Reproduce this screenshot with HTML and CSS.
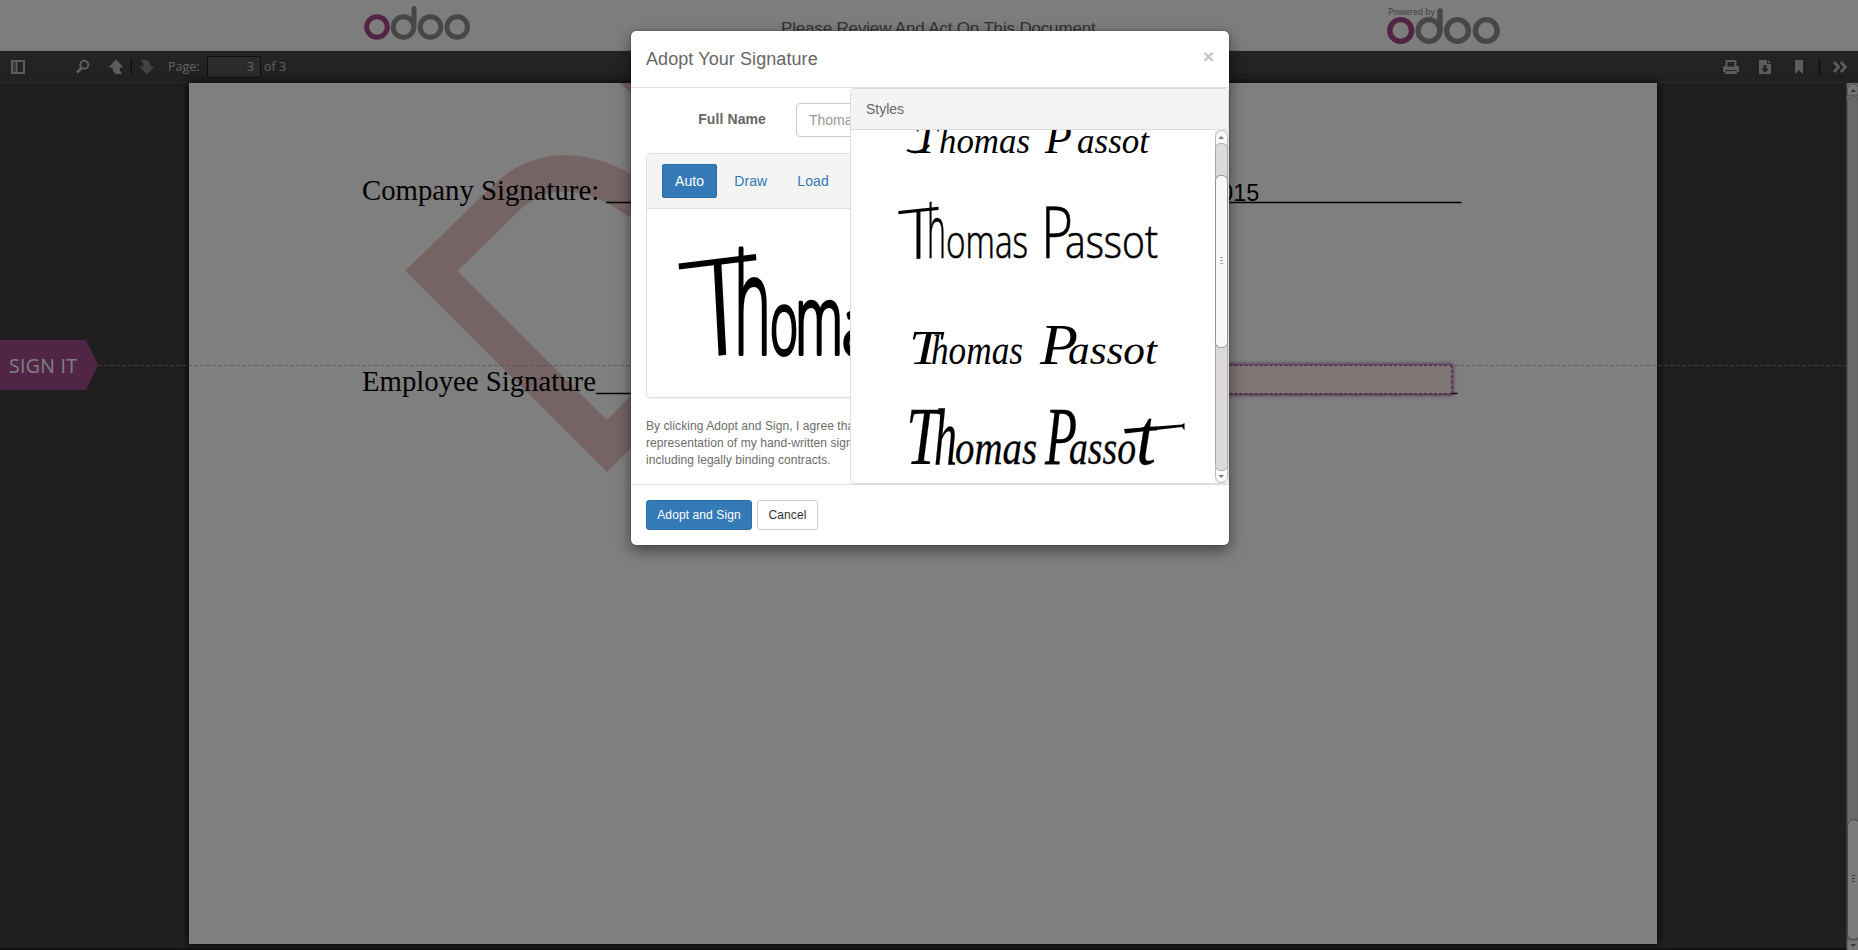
FILE: index.html
```html
<!DOCTYPE html>
<html lang="en">
<head>
<meta charset="utf-8">
<title>Adopt Your Signature</title>
<link rel="stylesheet" href="styles.css">
</head>
<body>
<div class="app">
  <header class="topbar">
    <svg class="logo-left" width="108" height="36" viewBox="363 5 108 36" fill="none" stroke-width="5">
      <circle cx="377" cy="27" r="10.3" stroke="#a24689"/>
      <g stroke="#8f8f8f"><circle cx="403.5" cy="27" r="10.3"/><circle cx="430.5" cy="27" r="10.3"/><circle cx="457.2" cy="27" r="10.3"/><path d="M414 27V8.5" stroke-linecap="round"/></g>
    </svg>
    <div class="headline">Please Review And Act On This Document</div>
    <div class="powered">
      <span class="powered-label">Powered by</span>
      <svg width="115" height="38" viewBox="1386 7 115 38" fill="none" stroke-width="5.4">
        <circle cx="1400.7" cy="30.5" r="10.9" stroke="#a24689"/>
        <g stroke="#8f8f8f"><circle cx="1429" cy="30.5" r="10.9"/><circle cx="1457.5" cy="30.5" r="10.9"/><circle cx="1486.3" cy="30.5" r="10.9"/><path d="M1440 30V11" stroke-linecap="round"/></g>
      </svg>
    </div>
  </header>

  <nav class="toolbar">
    <svg class="tools" width="150" height="32" viewBox="10 51 150 32">
      <path d="M12 61H24V73H12ZM16.5 61V73" fill="none" stroke="#b8b8b8" stroke-width="2"/>
      <path d="M13 62H15.500V72H13Z" fill="#777"/>
      <circle cx="84.3" cy="64.8" r="4" fill="none" stroke="#b8b8b8" stroke-width="2.1"/>
      <path d="M81.5 68L77 72.5" stroke="#b8b8b8" stroke-width="2.8"/>
      <path d="M116 59.500L123.500 67.500H119.7Q119.5 72 122.5 74H116Q112.5 72 112.5 67.5H108.500Z" fill="#b8b8b8"/>
      <path d="M131.5 59V75" stroke="#161616" stroke-width="1.4"/><path d="M132.5 59V75" stroke="#555" stroke-width=".6"/>
      <path d="M147 74.500L154.500 66.500H150.5Q150.5 61.5 147 60H140.5Q143.5 62 143.5 66.5H139.500Z" fill="#858585"/>
    </svg>
    <span class="page-label">Page:</span>
    <span class="page-input">3</span>
    <span class="page-count">of 3</span>
    <svg class="tools-right" width="130" height="32" viewBox="1720 51 130 32">
      <g fill="#b8b8b8">
        <path d="M1725.5 60H1735L1736.5 61.5V66H1738Q1739 66 1739 67V72H1736.5V70H1725.5V72H1723V67.5Q1723 66 1725.5 65.5ZM1727.5 62V66.5H1734.5V62Z" fill-rule="evenodd"/>
        <path d="M1726 71H1736L1737.5 74H1724.5Z"/>
        <path d="M1759 60H1767V64H1771V74H1759ZM1768 60L1771 63H1768Z"/>
        <path d="M1795 60H1803V74L1799 70L1795 74Z"/>
      </g>
      <path d="M1763.5 65H1766.5V68.5H1769L1765 73L1761 68.5H1763.5Z" fill="#444"/>
      <path d="M1819.5 59V75" stroke="#161616" stroke-width="1.4"/>
      <path d="M1834 62L1838.5 67L1834 72M1841 62L1845.5 67L1841 72" fill="none" stroke="#b8b8b8" stroke-width="2.8"/>
    </svg>
  </nav>

  <main class="viewer">
    <div class="sheet">
      <svg class="watermark" width="460" height="390" viewBox="189 83 460 390">
        <path d="M620 83H640V102Z" fill="#eac8c6"/>
        <path fill="none" stroke="#eac8c6" stroke-width="36.500" d="M640 203Q602 173 566 173.500Q530 173 503 201L431.200 271L607 446L650 402"/>
      </svg>
      <div class="doc-line first"><span class="doc-text">Company Signature: _____</span><span class="doc-fill">_________________</span></div>
      <div class="doc-line second"><span class="doc-text">Employee Signature_____</span><span class="doc-fill">_________________</span></div>
      <div class="doc-date">2015</div>
    </div>
    <div class="guide"></div>
    <div class="sign-field"></div>
    <div class="sign-tag"><span class="sign-text">SIGN IT</span></div>
    <div class="outer-scroll">
      <svg width="12" height="867" viewBox="1846 83 12 867">
        <path d="M1846 83H1858V950H1846Z" fill="#d6d4d0"/>
        <path d="M1847.5 95V88Q1850 84 1853.5 84Q1857 84 1858 87V95Z" fill="#f2f2f2" stroke="#aaa"/>
        <path d="M1850.500 92H1856L1853.200 89Z" fill="#666"/>
        <path d="M1847.500 950V101Q1850 96.500 1853.500 96.500Q1857 96.500 1858 100V950Z" fill="#d8d5cf" stroke="#aaa"/>
        <path d="M1847.500 825Q1849 819.500 1853.500 819.500Q1857 819.500 1858.500 822V937Q1857 939.500 1853.500 939.500Q1848 939.500 1847.500 934Z" fill="#f6f6f6" stroke="#888"/>
        <path d="M1852 875.500H1855M1852 878.500H1855M1852 881.500H1855" stroke="#777"/>
        <path d="M1847.500 941V950H1858V941Z" fill="#eee"/><path d="M1850.500 944H1856L1853.200 947Z" fill="#666"/>
        <path d="M1846.500 83V950" stroke="#777"/>
      </svg>
    </div>
  </main>
</div>

<div class="backdrop">
  <section class="modal">
    <div class="modal-header"><h4 class="modal-title">Adopt Your Signature</h4><span class="close">×</span></div>
    <div class="modal-body">
      <div class="name-row"><label class="name-label">Full Name</label><div class="name-input">Thomas Passot</div></div>
      <div class="card">
        <div class="tabs"><span class="tab active">Auto</span><span class="tab">Draw</span><span class="tab">Load</span></div>
        <svg class="preview" width="203" height="187" viewBox="647 210 203 187">
          <text class="hand" font-size="136" textLength="79" lengthAdjust="spacingAndGlyphs" transform="translate(683 361) skewY(-7) skewX(3)">T</text>
          <text class="hand" y="355" stroke="#000" stroke-width="4" stroke-linejoin="round"><tspan x="734" font-size="139" textLength="37" lengthAdjust="spacingAndGlyphs">h</tspan><tspan x="770" font-size="88" textLength="28" lengthAdjust="spacingAndGlyphs">o</tspan><tspan x="795" font-size="96" textLength="48" lengthAdjust="spacingAndGlyphs">m</tspan><tspan x="842" font-size="80" textLength="60" lengthAdjust="spacingAndGlyphs">as</tspan></text>
        </svg>
      </div>
      <p class="legal">By clicking Adopt and Sign, I agree that the signature will be the electronic<br>representation of my hand-written signature for all purposes when I use it,<br>including legally binding contracts.</p>
      <aside class="styles">
        <div class="styles-head">Styles</div>
        <div class="styles-body">
          <svg class="choices" width="364" height="353" viewBox="851 130 364 353">
            <text class="pen" y="153"><tspan x="914" font-size="42">T</tspan><tspan x="939" font-size="36" textLength="91" lengthAdjust="spacingAndGlyphs">homas</tspan> <tspan x="1045" font-size="44">P</tspan><tspan x="1077" font-size="36" textLength="72" lengthAdjust="spacingAndGlyphs">assot</tspan></text>
            <path d="M907 150Q919 156 929 145" class="swash"/>
            <text class="hand" font-size="70" textLength="41" lengthAdjust="spacingAndGlyphs" transform="translate(898 261) skewY(-6)">T</text>
            <text class="hand thin" y="258"><tspan x="927" font-size="74" textLength="19" lengthAdjust="spacingAndGlyphs">h</tspan><tspan x="946" font-size="46" textLength="82" lengthAdjust="spacingAndGlyphs">omas</tspan> <tspan x="1041" font-size="72" textLength="32" lengthAdjust="spacingAndGlyphs">P</tspan><tspan x="1065" font-size="46" textLength="93" lengthAdjust="spacingAndGlyphs">assot</tspan></text>
            <text class="pen" y="364"><tspan x="909" font-size="48" textLength="32" lengthAdjust="spacingAndGlyphs">T</tspan><tspan x="931" font-size="42" textLength="92" lengthAdjust="spacingAndGlyphs">homas</tspan> <tspan x="1040" font-size="56" textLength="38" lengthAdjust="spacingAndGlyphs">P</tspan><tspan x="1068" font-size="41" textLength="89" lengthAdjust="spacingAndGlyphs">assot</tspan></text>
            <text class="pen brush" y="464"><tspan x="906" font-size="82" textLength="34" lengthAdjust="spacingAndGlyphs">T</tspan><tspan x="934" font-size="80" textLength="23" lengthAdjust="spacingAndGlyphs">h</tspan><tspan x="955" font-size="48" textLength="82" lengthAdjust="spacingAndGlyphs">omas</tspan> <tspan x="1045" font-size="82" textLength="32" lengthAdjust="spacingAndGlyphs">P</tspan><tspan x="1069" font-size="48" textLength="67" lengthAdjust="spacingAndGlyphs">asso</tspan><tspan x="1136" font-size="80" textLength="20" lengthAdjust="spacingAndGlyphs">t</tspan></text>
            <path d="M1124 429L1182 424.500L1184.500 423V430.500L1182 427L1125 433.500Z"/>
          </svg>
          <svg class="inner-scroll" width="13" height="353" viewBox="1215 130 13 353">
            <path d="M1215 130H1228V483H1215Z" fill="#f1f1f1"/>
            <rect x="1215.500" y="130.500" width="12" height="352" rx="6" fill="#f8f8f8" stroke="#bbb"/>
            <rect x="1215.500" y="143.500" width="12" height="327" rx="5" fill="#dcdbd9" stroke="#aaa"/>
            <rect x="1215.500" y="175.500" width="12" height="172" rx="5" fill="#f7f7f7" stroke="#969492"/>
            <path d="M1220 257.500H1223M1220 260.500H1223M1220 263.500H1223" stroke="#aaa"/>
            <path d="M1218.500 139H1224L1221.200 136ZM1218.500 475H1224L1221.200 478Z" fill="#777"/>
          </svg>
        </div>
      </aside>
    </div>
    <div class="modal-footer"><span class="btn primary">Adopt and Sign</span><span class="btn">Cancel</span></div>
  </section>
</div>
</body>
</html>
```
FILE: styles.css
```css
* { box-sizing: border-box; }
body { margin: 0; width: 1858px; height: 950px; overflow: hidden; font: 14px/20px "Liberation Sans", Arial, sans-serif; color: #666; position: relative; }
.app { width: 1858px; height: 950px; display: flex; flex-direction: column; background: #3e3e3e; }
.topbar { height: 51px; flex: none; background: #fafafa; display: flex; align-items: flex-start; padding-left: 363px; border-bottom: 1px solid #e6e6e6; }
.logo-left { margin-top: 5px; }
.headline { width: 316px; margin: 19px 0 0 310px; font-size: 17px; letter-spacing: -.17px; line-height: 20px; white-space: nowrap; }
.powered { margin: 7px 0 0 289px; position: relative; height: 38px; }
.powered svg { display: block; }
.powered-label { position: absolute; left: 2px; top: 0; font: 8.5px/10px "Open Sans", sans-serif; white-space: nowrap; color: #777; }
.toolbar { height: 32px; flex: none; display: flex; align-items: center; background: linear-gradient(#494949, #424242); border-bottom: 1px solid #555; padding: 0 8px 0 10px; font: 12.5px/20px "Open Sans", sans-serif; color: #c4c4c4; }
.page-label { margin-left: 8px; width: 39px; white-space: nowrap; }
.page-input { width: 54px; height: 22px; border: 1px solid #1c1c1c; border-radius: 2px; background: #565656; text-align: right; padding-right: 6px; }
.page-count { margin-left: 3px; }
.tools-right { margin-left: auto; }
.viewer { flex: 1; position: relative; border-bottom: 2px solid #2d2428; }
.sheet { position: relative; margin-left: 189px; width: 1468px; height: 861px; background: #fff; box-shadow: 0 0 9px #000; font: 28.75px/40px "Liberation Serif", serif; color: #000; padding: 87px 196px 0 173px; }
.watermark { position: absolute; left: 0; top: 0; }
.doc-line { position: relative; display: flex; justify-content: space-between; height: 40px; white-space: pre; }
.doc-line.second { margin: 151px 4px 0 0; }
.doc-date { position: absolute; left: 1018px; top: 90px; font: 23.5px/40px "Liberation Sans", sans-serif; }
.guide { position: absolute; left: 98px; right: 12px; top: 282px; height: 1px; background: repeating-linear-gradient(90deg, #a0a0a0 0 4px, transparent 4px 6px); opacity: .65; }
.sign-field { position: absolute; left: 1100px; top: 282px; width: 352px; height: 29px; background: #fdecea; border: 1px dashed #9e488c; box-shadow: 0 0 4px 1px #a24689; }
.sign-tag { position: absolute; left: 0; top: 257px; width: 98px; height: 50px; background: #a04a8c; clip-path: polygon(0 0, 86px 0, 100% 50%, 86px 100%, 0 100%); color: #fff; font: 19.5px/52px "Open Sans", sans-serif; padding-left: 9px; letter-spacing: .3px; }
.outer-scroll { position: absolute; right: 0; top: 0; height: 867px; }
.outer-scroll svg { display: block; }
.backdrop { position: absolute; inset: 0; background: rgba(0, 0, 0, .5); padding: 31px 0 0 631px; }
.modal { width: 598px; height: 514px; background: #fff; border-radius: 5px; box-shadow: 0 5px 15px rgba(0, 0, 0, .5), 0 0 1px #000; }
.modal-header { height: 57px; border-bottom: 1px solid #e2e2e2; display: flex; justify-content: space-between; padding: 16px 15px 0; }
.modal-title { margin: 0; font-size: 18px; letter-spacing: .08px; line-height: 25px; font-weight: 400; }
.close { font-weight: 700; font-size: 19px; line-height: 20px; color: #c4c4c4; }
.modal-body { position: relative; height: 397px; padding: 15px; overflow: hidden; border-bottom: 1px solid #e2e2e2; }
.name-row { display: flex; height: 34px; align-items: center; }
.name-label { width: 120px; text-align: right; font-weight: 700; padding-bottom: 2px; letter-spacing: .1px; }
.name-input { margin-left: 30px; width: 300px; height: 34px; border: 1px solid #ccc; border-radius: 4px; padding: 6px 12px; color: #999; }
.card { margin-top: 16px; height: 245px; border: 1px solid #ddd; border-radius: 4px; box-shadow: 0 1px 1px rgba(0, 0, 0, .05); }
.tabs { height: 55px; background: #f4f4f4; border-bottom: 1px solid #ddd; display: flex; padding: 10px 15px; gap: 4px; }
.tab { height: 34px; padding: 7px 13px; line-height: 20px; color: #337ab7; border-radius: 3px; letter-spacing: .1px; }
.tab.active { background: #337ab7; color: #fff; box-shadow: inset 0 0 0 1px #2a6ca5; }
.preview, .choices { display: block; }
.legal { margin: 20px 0 0; font-size: 12px; line-height: 17.14px; white-space: nowrap; color: #6c6c6c; letter-spacing: .07px; }
.styles { position: absolute; left: 219px; top: 0; width: 379px; height: 396px; border: 1px solid #ddd; border-radius: 4px; background: #fff; overflow: hidden; }
.styles-head { height: 41px; padding: 10px 15px; background: #f4f4f4; border-bottom: 1px solid #ddd; }
.styles-body { display: flex; height: 353px; }
.inner-scroll { display: block; }
.modal-footer { display: flex; gap: 5px; padding: 15px; }
.btn { width: 61px; text-align: center; height: 30px; border: 1px solid #ccc; border-radius: 3px; padding: 5px 0; font-size: 12px; letter-spacing: .1px; line-height: 18px; color: #333; }
.btn.primary { width: 106px; background: #337ab7; border-color: #2e6da4; color: #fff; }
.hand { font-family: "Open Sans", sans-serif; font-weight: 300; }
.thin { stroke: #000; stroke-width: .7; }
.pen { font-family: "Liberation Serif", serif; font-style: italic; }
.brush { stroke: #000; stroke-width: .3; }
.swash { fill: none; stroke: #000; stroke-width: 2.5; }
```
